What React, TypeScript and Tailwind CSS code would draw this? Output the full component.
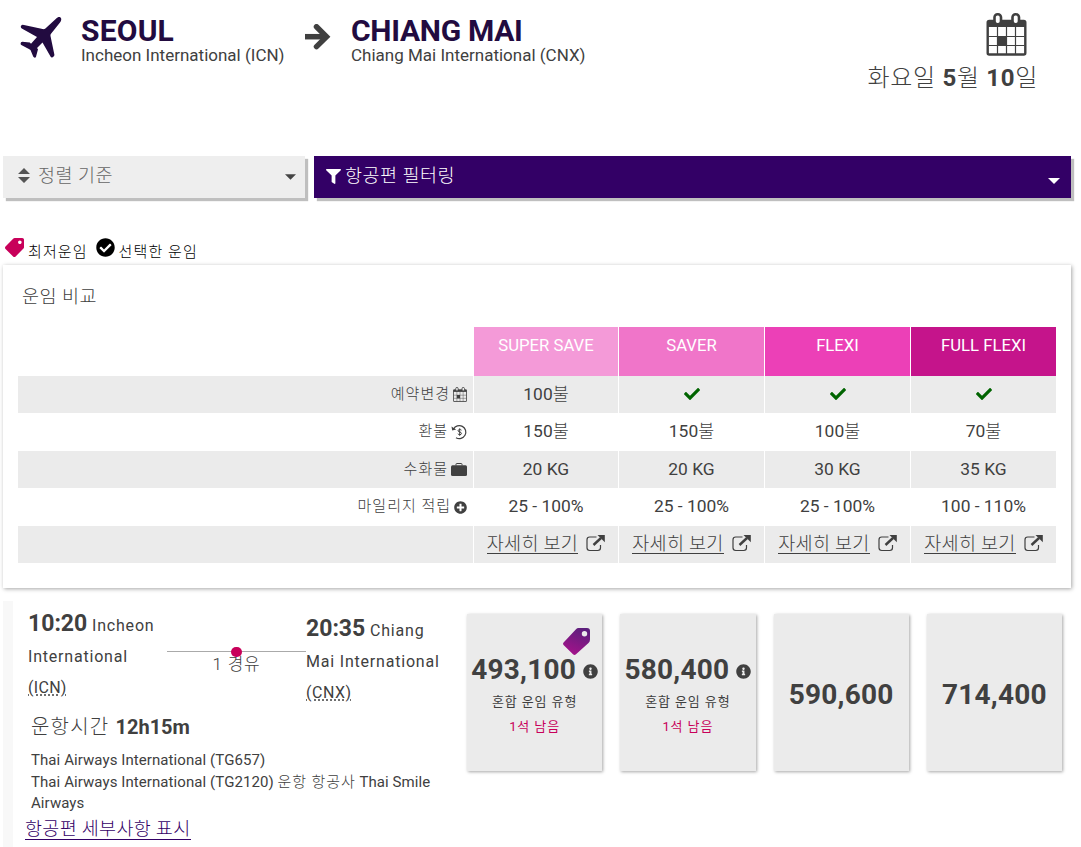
import type { ReactNode } from "react";
import { FaCheck, FaCheckCircle, FaFilter, FaInfoCircle, FaPlusCircle, FaTag } from "react-icons/fa";

const fares = [
  { name: "SUPER SAVE", color: "bg-[#f49ad8]", change: "100불", refund: "150불", baggage: "20 KG", miles: "25 - 100%" },
  { name: "SAVER", color: "bg-[#f075c9]", change: "", refund: "150불", baggage: "20 KG", miles: "25 - 100%" },
  { name: "FLEXI", color: "bg-[#ec40b7]", change: "", refund: "100불", baggage: "30 KG", miles: "25 - 100%" },
  { name: "FULL FLEXI", color: "bg-[#c5148b]", change: "", refund: "70불", baggage: "35 KG", miles: "100 - 110%" },
];

const prices = [
  { amount: "493,100", lowest: true, mixed: true },
  { amount: "580,400", lowest: false, mixed: true },
  { amount: "590,600", lowest: false, mixed: false },
  { amount: "714,400", lowest: false, mixed: false },
];

const PlaneIcon = () => (
  <svg className="w-[42px] h-[42px] shrink-0" viewBox="0 0 42 42" fill="#220b40">
    <path d="M40.500.5c1.300 1 .8 3.500-.5 5L31 16.800c-.7 1-.6 1.800-.4 2.800l3.800 18.200c.3 1.800-2.800 3.800-3.900 1.700L22.500 25.500 17 31l1 1.300-2 7.500c-.4 1.400-2.200 1.200-2.800-.2L10.500 33l-1.600-1-7.600-4c-1.300-.8-.6-3.200 1-3.200l7.500.8 1.200 1.100 6-6.700L1.800 11.500C0 10.500.8 7.700 2.800 7.800l19.800 4.300c1 .2 2 .2 2.800-.6L36 1.700C37.500.3 39.300-.4 40.500.5z" />
  </svg>
);

const CalendarIcon = ({ className }: { className: string }) => (
  <svg className={className} viewBox="0 0 40 43" fill="none">
    <rect x="1.200" y="8" width="37.600" height="33.500" rx="1.500" stroke="currentColor" strokeWidth="2.400" />
    <path d="M1 8h38v6H1z" fill="currentColor" />
    <path d="M11 14v27M20 14v27M29 14v27M2 23.500h36M2 32.500h36" stroke="currentColor" strokeWidth="1.200" />
    <path d="M11 23h9v9.500h-9z" fill="currentColor" />
    <rect x="8" y="1.300" width="6.500" height="10" rx="3" fill="#fff" stroke="currentColor" strokeWidth="2.600" />
    <rect x="26" y="1.300" width="6.500" height="10" rx="3" fill="#fff" stroke="currentColor" strokeWidth="2.600" />
  </svg>
);

const RefundIcon = () => (
  <svg className="w-4 h-4" viewBox="0 0 16 16" fill="none" stroke="currentColor" strokeWidth="1.200">
    <path d="M2.500 5.200A6.500 6.500 0 1 1 5 13.700" />
    <path d="M.5 2.500l.7 4 4-1z" fill="currentColor" stroke="none" />
    <path d="M10.500 6.200C9.700 5.200 7 5.300 7 6.800s3.500.9 3.500 2.600S7.600 11 6.800 9.800M8.700 4.300v7.500" strokeWidth="1" />
  </svg>
);

const BaggageIcon = () => (
  <svg className="w-4 h-[13px]" viewBox="0 0 16 13" fill="currentColor">
    <path d="M5 2.500V1.200Q5 .5 5.700.5h4.600q.7 0 .7.7v1.300" fill="none" stroke="currentColor" />
    <rect x="0" y="2.300" width="16" height="10.700" rx="1.500" />
  </svg>
);

const ExternalIcon = () => (
  <svg className="w-[19px] h-[17px]" viewBox="0 0 19 17" fill="none" stroke="currentColor">
    <path d="M10.500 2H3.700Q1 2 1 4.700v8.100q0 2.700 2.700 2.700h8.100q2.700 0 2.700-2.700V10" strokeWidth="1.200" />
    <path d="M7.500 10l7.500-7" strokeWidth="2.400" />
    <path d="M11.500 0h7.300v7.300z" fill="currentColor" stroke="none" />
  </svg>
);

const Caret = ({ className }: { className: string }) => (
  <svg className={className} viewBox="0 0 12 6" fill="currentColor">
    <path d="M0 0h12L6 6z" />
  </svg>
);

const Row = ({ label, icon, shaded, cells }: { label: string; icon?: ReactNode; shaded?: boolean; cells: ReactNode[] }) => {
  const bg = shaded ? "bg-[#ebebeb]" : "bg-white";
  return (
    <div className="grid grid-cols-[455px_144px_145px_145px_1fr] gap-x-px h-[37px]">
      <div className={`${bg} flex items-center justify-end gap-[3px] pr-[6px] text-[15px] leading-none tracking-[1px] font-light`}>
        <span className="-mt-px">{label}</span>
        {icon}
      </div>
      {cells.map((cell, index) => (
        <div key={index} className={`${bg} flex items-center justify-center text-[17.4px] leading-none`}>
          {cell}
        </div>
      ))}
    </div>
  );
};

const Header = () => (
  <header className="flex h-[156px] pl-5 pr-[43px]">
    <div className="pt-[17px]">
      <PlaneIcon />
    </div>
    <div className="pl-[19px] pt-[15px] w-[243px]">
      <h2 className="text-[30px] leading-[32px] tracking-[0.2px] font-bold text-[#220b40]">SEOUL</h2>
      <p className="text-[17px] leading-[17px] whitespace-nowrap">Incheon International (ICN)</p>
    </div>
    <svg className="w-[26px] h-[26px] mt-6" viewBox="0 0 26 26" fill="none" stroke="#404040" strokeWidth="5.500">
      <path d="M0 12.700h21" />
      <path d="M11.500 2.800l10 9.900-10 9.900" strokeLinecap="round" />
    </svg>
    <div className="pl-5 pt-[15px]">
      <h2 className="text-[30px] leading-[32px] tracking-[-0.3px] font-bold text-[#220b40]">CHIANG MAI</h2>
      <p className="text-[17px] leading-[17px] whitespace-nowrap">Chiang Mai International (CNX)</p>
    </div>
    <div className="ml-auto flex flex-col items-end pt-[13px]">
      <CalendarIcon className="w-[41px] h-[43px] mr-[11px]" />
      <p className="text-[24px] leading-[45px] tracking-[0.7px] font-light whitespace-nowrap">
        화요일 <b className="font-bold">5</b>월 <b className="font-bold">10</b>일
      </p>
    </div>
  </header>
);

const Toolbar = () => (
  <div className="flex gap-[9px] pl-[3px] h-[42px]">
    <button className="flex items-center w-[302px] bg-[#eeeeee] pl-[15px] pr-[9px] shadow-[3px_3px_1px_#bfbfbf] text-[#666]">
      <svg className="w-[12px] h-[15px] mr-[8px] text-[#555] -mt-1" viewBox="0 0 12 15" fill="currentColor">
        <path d="M6 0l6 6H0zM0 9h12l-6 6z" />
      </svg>
      <span className="text-[18.500px] leading-none tracking-[0.5px] font-light -mt-px">정렬 기준</span>
      <Caret className="w-[11px] h-[6px] ml-auto text-[#444]" />
    </button>
    <button className="flex items-center w-[757px] bg-[#330066] pl-[12px] pr-[11px] shadow-[3px_3px_1px_#bfbfbf] text-white">
      <FaFilter className="w-[15px] h-[15px] mr-[4px] -mt-[2px]" />
      <span className="text-[18.500px] leading-none tracking-[0.5px] font-light -mt-px">항공편 필터링</span>
      <Caret className="w-[12px] h-[6px] ml-auto mt-2" />
    </button>
  </div>
);

const FareTable = () => (
  <section className="ml-[3px] w-[1068px] h-[323px] bg-white shadow-[1px_1px_4px_rgba(0,0,0,0.35)] px-[15px]">
    <h3 className="h-[62px] pt-[19px] pl-1 text-[18.500px] leading-[26px] tracking-[0.5px] font-light">운임 비교</h3>
    <div className="grid grid-cols-[455px_144px_145px_145px_1fr] gap-x-px h-[49px]">
      <span />
      {fares.map((fare) => (
        <div key={fare.name} className={`${fare.color} text-white text-center text-[16.700px] leading-[37px]`}>
          {fare.name}
        </div>
      ))}
    </div>
    <div className="flex flex-col gap-[0.5px]">
      <Row
        shaded
        label="예약변경"
        icon={<CalendarIcon className="w-[14px] h-[15px]" />}
        cells={fares.map((fare) =>
          fare.change ? <Amount text={fare.change} /> : <FaCheck className="w-4 h-4 -mt-[2px] text-[#006400]" />
        )}
      />
      <Row label="환불" icon={<RefundIcon />} cells={fares.map((fare) => <Amount text={fare.refund} />)} />
      <Row shaded label="수화물" icon={<BaggageIcon />} cells={fares.map((fare) => fare.baggage)} />
      <Row label="마일리지 적립" icon={<FaPlusCircle className="w-[13px] h-[13px]" />} cells={fares.map((fare) => fare.miles)} />
      <Row
        shaded
        label=""
        cells={fares.map(() => (
          <a className="flex items-center gap-[8px] -mt-[3px]">
            <span className="text-[18.500px] leading-[22px] h-[21px] tracking-[0.3px] font-light border-b border-[#404040]">자세히 보기</span>
            <ExternalIcon />
          </a>
        ))}
      />
    </div>
  </section>
);

// amount in regular weight, currency unit in light
const Amount = ({ text }: { text: string }) => (
  <span>
    {text.replace("불", "")}
    <span className="font-light">불</span>
  </span>
);

const Flight = () => (
  <section className="flex mt-[13px] ml-[3px] h-[246px] border-l-[10px] border-[#f8f8f8]">
    <div className="w-[454px] shrink-0">
      <div className="flex h-[110px] text-[16px] leading-[31.200px] tracking-[0.8px]">
        <p className="w-[150px] pl-[15px] pt-[7px]">
          <b className="text-[23px] tracking-normal font-bold">10:20</b> Incheon International{" "}
          <span className="underline decoration-dotted tracking-[0.3px] underline-offset-1">(ICN)</span>
        </p>
        <div className="w-[139px] ml-[4px] mt-[50px] border-t border-[#aaa] h-10 flex flex-col items-center relative">
          <span className="absolute -top-[5px] left-[64px] w-[11px] h-[10px] rounded-full bg-[#c8005a]" />
          <p className="text-[17px] leading-[24px] font-light">1 경유</p>
        </div>
        <p className="w-[146px] pt-[12px]">
          <b className="text-[23px] tracking-normal font-bold">20:35</b> Chiang Mai International{" "}
          <span className="underline decoration-dotted tracking-[0.5px] underline-offset-1">(CNX)</span>
        </p>
      </div>
      <p className="pl-[18px] pt-[1px] text-[20px] leading-[30px] font-light">
        <span className="tracking-[1.200px]">운항시간 </span>
        <b className="font-bold">12h15m</b>
      </p>
      <div className="pl-[18px] pt-[8px] text-[15px] leading-[21.500px] tracking-[0.08px] w-[430px]">
        <p>Thai Airways International (TG657)</p>
        <p>
          Thai Airways International (TG2120) <span className="font-light tracking-[0.9px]">운항 항공사</span> Thai Smile Airways
        </p>
      </div>
      <a className="inline-block ml-[12px] mt-[4px] text-[18.500px] leading-[20px] tracking-[0.3px] font-light text-[#330066] border-b border-[#330066]">
        항공편 세부사항 표시
      </a>
    </div>
    <div className="grid grid-cols-4 gap-[18px] w-[595px] h-[157px] mt-[13px]">
      {prices.map((price) => (
        <div
          key={price.amount}
          className="relative flex flex-col items-center justify-center bg-[#ebebeb] shadow-[1px_1px_3px_rgba(0,0,0,0.35)]"
        >
          {price.lowest && (
            <svg className="absolute top-[14px] left-[96px] w-[27px] h-[27px]" viewBox="0 0 27 27">
              <linearGradient id="tag" x1="0.700" y1="0" x2="0.300" y2="1">
                <stop offset="0" stopColor="#5c1f7c" />
                <stop offset="1" stopColor="#a5128b" />
              </linearGradient>
              <path
                fill="url(#tag)"
                fillRule="evenodd"
                d="M15.500 0H24q3 0 3 3v8.500q0 2-1.500 3.500L13 26.300q-1.500 1.400-3 0L.8 17.300q-1.500-1.500 0-3L13 1.200Q14 0 15.500 0zM21.500 3a2.700 2.700 0 1 0 0 5.400 2.700 2.700 0 0 0 0-5.400z"
              />
            </svg>
          )}
          <div className={price.mixed ? "flex items-center gap-[7px] h-[40px] mt-[4px]" : "flex items-center h-[40px] mt-[4px]"}>
            <span className="text-[28px] leading-none tracking-[0.2px] font-bold">{price.amount}</span>
            {price.mixed && <FaInfoCircle className="w-[15px] h-[15px] mt-1" />}
          </div>
          {price.mixed && (
            <div className="flex flex-col items-center h-[50px] text-[13px] leading-[25px] tracking-[0.9px]">
              <p className="-mt-px">혼합 운임 유형</p>
              <p className="text-[#c8005a]">1석 남음</p>
            </div>
          )}
        </div>
      ))}
    </div>
  </section>
);

const App = () => (
  <main className="w-[1081px] h-[847px] overflow-hidden bg-white text-[#404040] font-[Roboto,'Noto_Sans_CJK_KR',sans-serif]">
    <Header />
    <Toolbar />
    <div className="flex items-center h-[67px] pt-[35px] pl-[5px] text-[15px] leading-none tracking-[1.100px] text-black font-light">
      <FaTag className="w-[19px] h-[19px] -scale-x-100 text-[#c8005a] -mt-1" />
      <span className="ml-[4px] mt-[6px]">최저운임</span>
      <FaCheckCircle className="w-[19px] h-[19px] ml-[8px] -mt-1" />
      <span className="ml-[4px] mt-[6px]">선택한 운임</span>
    </div>
    <FareTable />
    <Flight />
  </main>
);

export default App;
